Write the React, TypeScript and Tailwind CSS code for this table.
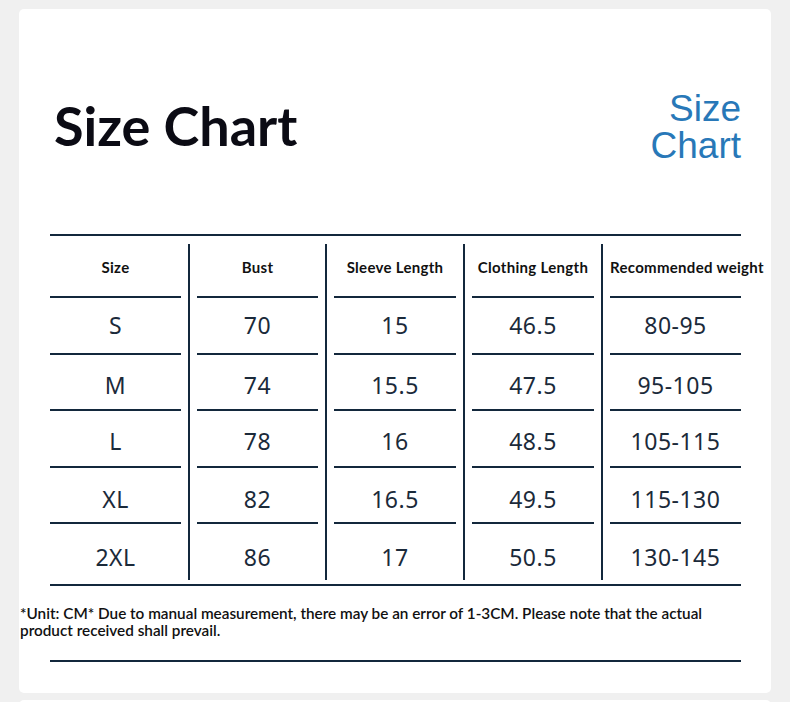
const columns = [
  { label: "Size", width: "w-[131px]", values: ["S", "M", "L", "XL", "2XL"] },
  { label: "Bust", width: "w-[121px]", values: ["70", "74", "78", "82", "86"] },
  { label: "Sleeve Length", width: "w-[122px]", values: ["15", "15.5", "16", "16.5", "17"] },
  { label: "Clothing Length", width: "w-[122px]", values: ["46.5", "47.5", "48.5", "49.5", "50.5"] },
  { label: "Recommended weight", width: "w-[131px]", values: ["80-95", "95-105", "105-115", "115-130", "130-145"] },
];

// the printed values sit a little lower in each successive row
const rowStyles = [
  "h-[57px]",
  "h-[56px] pt-[6px]",
  "h-[57px] pt-[6px]",
  "h-[56px] pt-[8px]",
  "h-[56px] pt-[10px]",
];

function Column({ label, width, values, last }: { label: string; width: string; values: string[]; last: boolean }) {
  return (
    <div className={`flex flex-col ${width}`}>
      <div
        className={`flex h-[54px] items-center border-b-2 border-[#13283c] pb-[6px] font-['Lato',sans-serif] text-[15px] font-bold tracking-[0.3px] whitespace-nowrap text-[#111] ${
          last ? "justify-start" : "justify-center"
        }`}
      >
        {label}
      </div>
      {values.map((v, i) => (
        <div
          key={v}
          className={`flex items-center justify-center font-['Noto_Sans',sans-serif] text-[23px] tracking-[0.5px] text-[#1b2a3a] ${rowStyles[i]} ${
            i < values.length - 1 ? "border-b-2 border-[#13283c]" : ""
          }`}
        >
          {v}
        </div>
      ))}
    </div>
  );
}

export default function App() {
  return (
    <div className="min-h-[702px] overflow-hidden bg-[#f0f0f0] pt-[9px]">
      <div className="ml-[19px] flex h-[684px] w-[752px] flex-col rounded-[5px] bg-white">
        {/* Title */}
        <div className="flex h-[225px] items-start justify-between">
          <div className="mt-[90px] ml-[35px] font-['Lato',sans-serif] text-[54px] leading-none font-bold text-[#0b0b14]">
            Size Chart
          </div>
          <div className="mt-[81px] mr-[30px] flex flex-col items-end font-['Liberation_Sans',Arial,sans-serif] text-[37px] leading-[37px] text-[#2878b8]">
            <span>Size</span>
            <span>Chart</span>
          </div>
        </div>

        {/* Table */}
        <div className="ml-[31px] w-[691px]">
          <div className="h-[2px] bg-[#13283c]" />
          <div className="mt-[8px] flex">
            {columns.map((col, i) => (
              <div key={col.label} className="flex">
                {i > 0 && <div className="mx-[7px] w-[2px] bg-[#13283c]" />}
                <Column {...col} last={i === columns.length - 1} />
              </div>
            ))}
          </div>
          <div className="mt-[4px] h-[2px] bg-[#13283c]" />
        </div>

        {/* Note */}
        <p className="mt-[19px] ml-[1px] font-['Lato',sans-serif] text-[15.3px] leading-[17px] font-semibold text-[#111]">
          *Unit: CM* Due to manual measurement, there may be an error of 1-3CM. Please note that the actual
          <br />
          product received shall prevail.
        </p>
        <div className="mt-[21px] ml-[31px] h-[2px] w-[691px] bg-[#13283c]" />
      </div>
      <div className="mt-[7px] ml-[19px] h-[20px] w-[752px] rounded-[5px] bg-white" />
    </div>
  );
}
